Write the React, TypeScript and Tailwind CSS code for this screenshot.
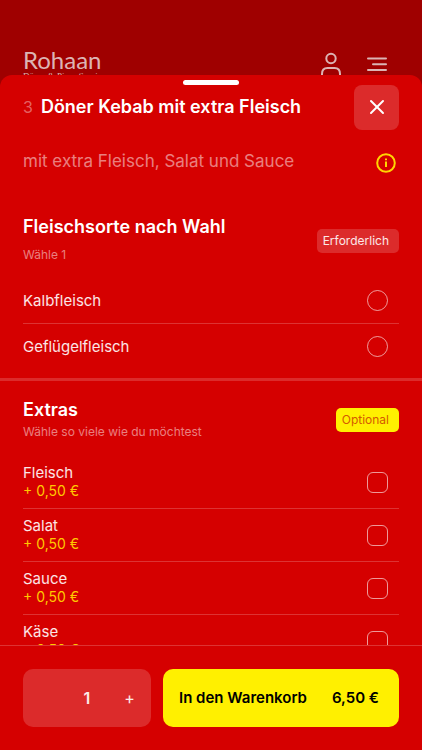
import { X } from "lucide-react";

interface Option {
  id: string;
  name: string;
  price?: string;
}

const MEATS: Option[] = [
  { id: "kalb", name: "Kalbfleisch" },
  { id: "gefluegel", name: "Geflügelfleisch" },
];

const EXTRAS: Option[] = [
  { id: "fleisch", name: "Fleisch", price: "+ 0,50 €" },
  { id: "salat", name: "Salat", price: "+ 0,50 €" },
  { id: "sauce", name: "Sauce", price: "+ 0,50 €" },
  { id: "kaese", name: "Käse", price: "+ 0,50 €" },
];

function PageHeader() {
  return (
    <header className="flex items-start justify-between pt-12 pr-[35px] pl-[23px] text-[#dcb4b4]">
      <a href="#home" className="block">
        <span className="block font-[Lato,sans-serif] text-2xl leading-6">Rohaan</span>
        <span className="block font-['Liberation_Serif',serif] text-[9px] leading-2 whitespace-nowrap">
          Döner &amp; Pizza Service
        </span>
      </a>
      <div className="flex gap-6 pt-1">
        <button type="button" aria-label="Konto">
          <svg className="h-6 w-6" viewBox="0 0 24 24" fill="none" stroke="currentColor" strokeWidth="2">
            <circle cx="12" cy="6.500" r="4.700" />
            <path d="M3 24v-2c0-3.500 2-6 5.500-6h7c3.500 0 5.500 2.500 5.500 6v2" />
          </svg>
        </button>
        <button type="button" aria-label="Menü">
          <svg className="h-6 w-5" viewBox="0 0 20 24" fill="none" stroke="currentColor" strokeWidth="2" strokeLinecap="round">
            <path d="M1 6.500h18M6 12.300h13M1 18h18" />
          </svg>
        </button>
      </div>
    </header>
  );
}

function InfoIcon() {
  return (
    <svg className="h-5 w-5" viewBox="0 0 20 20" fill="none" stroke="currentColor" strokeWidth="2">
      <circle cx="10" cy="10" r="8.800" />
      <path d="M10 8.500v5.500M10 5.500v1.700" />
    </svg>
  );
}

interface OptionRowProps {
  option: Option;
  type: "radio" | "checkbox";
  group: string;
}

function OptionRow({ option, type, group }: OptionRowProps) {
  return (
    <li className="border-b border-white/20 last:border-b-0">
      <label
        htmlFor={option.id}
        className={`flex items-center justify-between pr-[11px] ${option.price ? "h-[52px]" : "h-[45px]"}`}
      >
        <span>
          <span className="block text-[15px] leading-[18px] text-white/90">{option.name}</span>
          {option.price && <span className="block text-sm leading-[18px] text-[#ffc800]">{option.price}</span>}
        </span>
        <input
          id={option.id}
          type={type}
          name={group}
          className={`h-[21px] w-[21px] appearance-none border border-white/60 ${type === "radio" ? "rounded-full" : "rounded-md"}`}
        />
      </label>
    </li>
  );
}

export default function App() {
  return (
    <div className="relative h-screen overflow-hidden bg-[#9f0000] font-[Inter,sans-serif]">
      <PageHeader />

      <div
        role="dialog"
        aria-labelledby="dish-title"
        className="absolute inset-x-0 top-[75px] bottom-0 flex flex-col overflow-hidden rounded-t-xl bg-[#d50000] text-white"
      >
        <div className="absolute top-[5px] left-1/2 h-[5px] w-14 -translate-x-1/2 rounded-full bg-white" />

        {/* Title bar */}
        <div className="flex h-16 shrink-0 items-center justify-between px-[23px]">
          <div className="flex items-center gap-2">
            <span className="text-base text-white/40">3</span>
            <h1 id="dish-title" className="text-lg font-semibold whitespace-nowrap">Döner Kebab mit extra Fleisch</h1>
          </div>
          <button type="button" aria-label="Schließen" className="flex h-[45px] w-[45px] items-center justify-center rounded-lg bg-[#dc2b2b]">
            <X className="h-6 w-6" strokeWidth={2} />
          </button>
        </div>

        {/* Options */}
        <div className="min-h-0 flex-1 overflow-hidden">
          <div className="flex items-center justify-between px-[23px] pt-2">
            <p className="text-[17px] leading-7 text-white/50">mit extra Fleisch, Salat und Sauce</p>
            <button type="button" aria-label="Produktinfo" className="mr-[3px] pt-1 text-[#ffd400]">
              <InfoIcon />
            </button>
          </div>

          <section className="px-[23px] pt-10 pb-[9px]">
            <div className="flex items-center justify-between pb-[11px]">
              <div>
                <h2 className="text-lg leading-6 font-semibold">Fleischsorte nach Wahl</h2>
                <p className="pt-1 text-xs leading-6 text-white/50">Wähle 1</p>
              </div>
              <span className="rounded-[5px] bg-[#dc2b2b] pr-2.5 pl-1.5 text-xs leading-6 text-white/90">Erforderlich</span>
            </div>
            <ul>
              {MEATS.map((meat) => (
                <OptionRow key={meat.id} option={meat} type="radio" group="meat" />
              ))}
            </ul>
          </section>

          <section className="border-t-[3px] border-[#dc2b2b] px-[23px] pt-[17px]">
            <div className="flex items-center justify-between pb-[14px]">
              <div>
                <h2 className="text-lg leading-6 font-semibold">Extras</h2>
                <p className="text-xs leading-5 text-white/50">Wähle so viele wie du möchtest</p>
              </div>
              <span className="rounded-[5px] bg-[#fff000] pr-2.5 pl-1.5 text-xs leading-6 text-[#d55a00]">Optional</span>
            </div>
            <ul>
              {EXTRAS.map((extra) => (
                <OptionRow key={extra.id} option={extra} type="checkbox" group="extras" />
              ))}
            </ul>
          </section>
        </div>

        {/* Cart bar */}
        <div className="flex shrink-0 gap-3 border-t border-white/20 p-[23px]">
          <div className="grid h-[58px] w-32 grid-cols-3 items-center rounded-[10px] bg-[#dc2b2b] text-center text-white/90">
            <span className="col-start-2 text-base font-semibold">1</span>
            <button type="button" aria-label="Mehr" className="text-base">+</button>
          </div>
          <button
            type="button"
            className="flex h-[58px] flex-1 items-center justify-between rounded-[10px] bg-[#fff000] pr-5 pl-4 text-[15px] font-semibold text-black"
          >
            <span>In den Warenkorb</span>
            <span>6,50 €</span>
          </button>
        </div>
      </div>
    </div>
  );
}
